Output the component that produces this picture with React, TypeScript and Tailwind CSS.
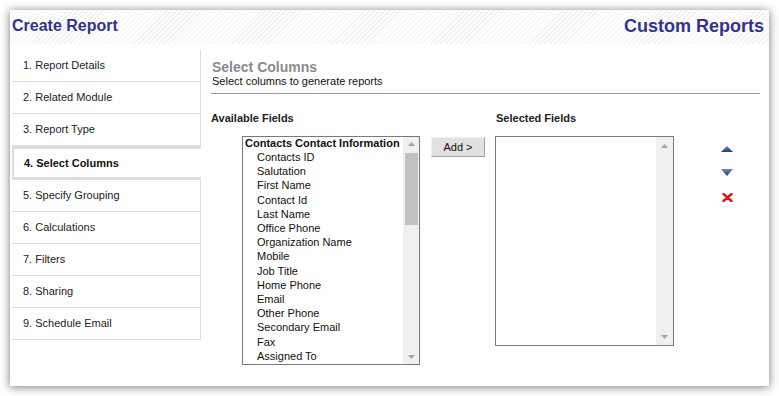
import React from "react";

const navItems = [
  "1. Report Details",
  "2. Related Module",
  "3. Report Type",
  "4. Select Columns",
  "5. Specify Grouping",
  "6. Calculations",
  "7. Filters",
  "8. Sharing",
  "9. Schedule Email",
];

const fields = [
  "Contacts ID",
  "Salutation",
  "First Name",
  "Contact Id",
  "Last Name",
  "Office Phone",
  "Organization Name",
  "Mobile",
  "Job Title",
  "Home Phone",
  "Email",
  "Other Phone",
  "Secondary Email",
  "Fax",
  "Assigned To",
];

function UpTri() {
  return (
    <svg width="7" height="4" viewBox="0 0 7 4">
      <path d="M0 4 L3.5 0 L7 4 Z" fill="#a3a3a3" />
    </svg>
  );
}
function DownTri() {
  return (
    <svg width="7" height="4" viewBox="0 0 7 4">
      <path d="M0 0 L3.5 4 L7 0 Z" fill="#a3a3a3" />
    </svg>
  );
}

export default function App() {
  return (
    <div
      className="w-[779px] h-[396px] bg-white pt-[10px] pl-[10px]"
      style={{ fontFamily: '"Liberation Sans", Arial, sans-serif' }}
    >
      <div className="w-[759px] h-[376px] bg-white shadow-[0_1px_9px_rgba(0,0,0,0.55)] flex flex-col">
        {/* header */}
        <div className="h-[34px] flex items-center justify-between pl-[2px] pr-[5px] pb-[3px] bg-[repeating-linear-gradient(135deg,#ffffff_0px,#ffffff_2.5px,#f0f0f0_2.5px,#f0f0f0_3.5px)]">
          <div className="text-[16px] font-bold text-[#33338f] leading-[20px]">Create Report</div>
          <div className="text-[18px] font-bold text-[#33338f] leading-[22px] mt-[1px]">Custom Reports</div>
        </div>
        <div className="flex pt-[5px] flex-1">
          {/* nav */}
          <div className="ml-[2px] w-[189px] pt-[1px] flex flex-col">
            {navItems.map((t, i) =>
              i === 3 ? (
                <div
                  key={t}
                  className="h-[34px] w-[189px] border-t-[3px] border-b-[3px] border-l-[2px] border-[#dddddd] bg-white flex items-center pl-[10px] text-[11px] font-bold text-[#111]"
                >
                  {t}
                </div>
              ) : (
                <div
                  key={t}
                  className="h-[32px] w-[189px] border-b border-r border-[#dddddd] flex items-center pl-[11px] text-[11px] text-[#222]"
                >
                  {t}
                </div>
              )
            )}
          </div>
          {/* content */}
          <div className="flex-1 pl-[10px] pr-[9px] pt-[11px] flex flex-col">
            <div className="text-[14px] font-bold text-[#8a8a8a] leading-[15px] pl-[1px]">Select Columns</div>
            <div className="text-[11px] text-[#111] leading-[12px] pl-[1px]">Select columns to generate reports</div>
            <div className="mt-[6px] border-t border-[#999999]" />
            <div className="mt-[18px] flex text-[11px] font-bold text-[#222] leading-[13px]">
              <div className="w-[285px]">Available Fields</div>
              <div>Selected Fields</div>
            </div>
            <div className="mt-[11px] flex items-start">
              {/* available list */}
              <div className="ml-[31px] w-[178px] h-[229px] border border-[#7a7a7a] flex">
                <div className="flex-1 overflow-hidden whitespace-nowrap text-[11px] text-[#111]">
                  <div className="pl-[2px] font-bold leading-[13px]">Contacts Contact Information</div>
                  {fields.map((f) => (
                    <div key={f} className="pl-[14px] leading-[14.2px]">
                      {f}
                    </div>
                  ))}
                </div>
                <div className="w-[16px] bg-[#f0f0f0] flex flex-col items-center">
                  <div className="h-[14px] flex items-center justify-center">
                    <UpTri />
                  </div>
                  <div className="mt-[2px] w-[13px] h-[72px] bg-[#c1c1c1]" />
                  <div className="flex-1" />
                  <div className="h-[14px] flex items-center justify-center">
                    <DownTri />
                  </div>
                </div>
              </div>
              {/* add button */}
              <div className="ml-[11px] mt-[1px] w-[54px] h-[20px] bg-[#e1e1e1] border border-t-[#f0f0f0] border-l-[#f0f0f0] border-r-[#a0a0a0] border-b-[#a0a0a0] flex items-center justify-center text-[11px] text-[#111]">
                Add &gt;
              </div>
              {/* selected list */}
              <div className="ml-[10px] w-[179px] h-[210px] border border-[#7a7a7a] flex">
                <div className="flex-1" />
                <div className="w-[17px] bg-[#f0f0f0] flex flex-col items-center">
                  <div className="h-[17px] flex items-center justify-center">
                    <UpTri />
                  </div>
                  <div className="flex-1" />
                  <div className="h-[17px] flex items-center justify-center">
                    <DownTri />
                  </div>
                </div>
              </div>
              {/* icons */}
              <div className="ml-[47px] mt-[10px] flex flex-col items-center gap-[17px]">
                <svg width="12" height="6" viewBox="0 0 12 6">
                  <defs>
                    <linearGradient id="gu" x1="0" y1="0" x2="0" y2="1">
                      <stop offset="0" stopColor="#6b8cc0" />
                      <stop offset="1" stopColor="#1e3e6e" />
                    </linearGradient>
                  </defs>
                  <path d="M0 6 L6 0 L12 6 Z" fill="url(#gu)" />
                </svg>
                <svg width="12" height="7" viewBox="0 0 12 7">
                  <defs>
                    <linearGradient id="gd" x1="0" y1="0" x2="0" y2="1">
                      <stop offset="0" stopColor="#6b8cc0" />
                      <stop offset="1" stopColor="#1e3e6e" />
                    </linearGradient>
                  </defs>
                  <path d="M0 0 L12 0 L6 7 Z" fill="url(#gd)" />
                </svg>
                <svg width="11" height="9" viewBox="0 0 11 9">
                  <path d="M1.5 1 L9.5 8 M9.5 1 L1.5 8" stroke="#e0161b" strokeWidth="2.4" strokeLinecap="round" />
                </svg>
              </div>
            </div>
          </div>
        </div>
      </div>
    </div>
  );
}
